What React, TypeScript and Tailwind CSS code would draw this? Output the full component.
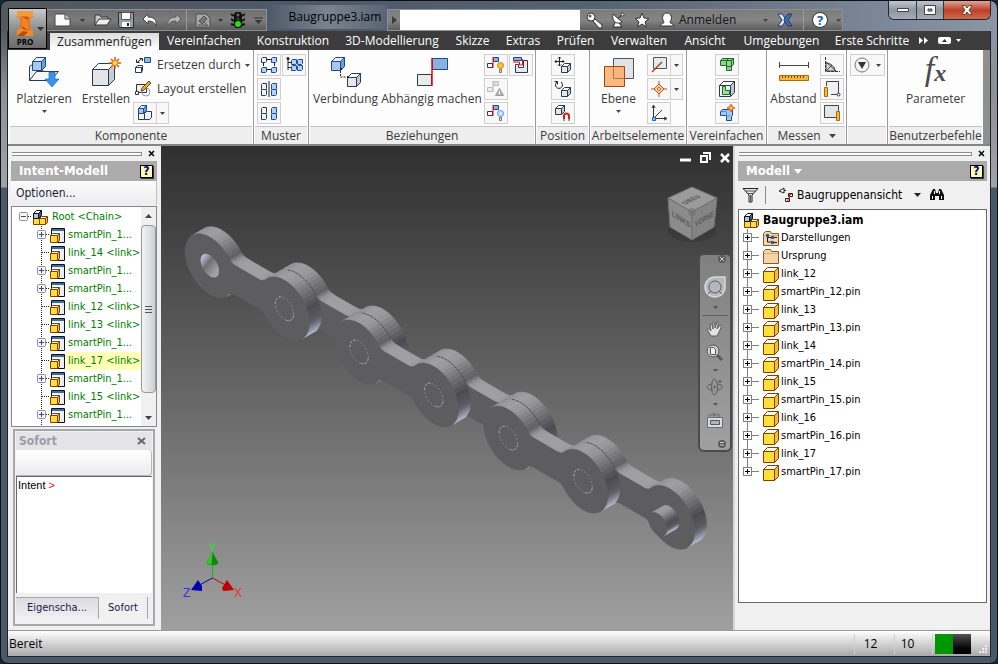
import type { ReactNode } from 'react';

type Point = [number, number];

// ---------------------------------------------------------------------------
// Small drawing helpers
// ---------------------------------------------------------------------------

const Svg = ({ w, h, children }: { w: number; h: number; children: ReactNode }) => (
  <svg width={w} height={h} viewBox={`0 0 ${w} ${h}`} className="block shrink-0" aria-hidden="true">
    {children}
  </svg>
);

interface CubeProps {
  x?: number;
  y?: number;
  s?: number;
  d?: number;
  front?: string;
  top?: string;
  side?: string;
  line?: string;
}

// Oblique box: square front face with a bevelled top and right side.
// Everything sits on half pixels so that the outline stays one pixel wide.
const Cube = ({ x = 0, y = 0, s = 9, d = 4, front = '#e4e7eb', top = '#fff', side = '#c3c8ce', line = '#2b3a4c' }: CubeProps) => (
  <g transform="translate(.5 .5)" stroke={line} strokeWidth="1" strokeLinejoin="round">
    <path d={`M${x} ${y + d}l${d} ${-d}h${s}l${-d} ${d}z`} fill={top} />
    <path d={`M${x + s} ${y + d}l${d} ${-d}v${s}l${-d} ${d}z`} fill={side} />
    <rect x={x} y={y + d} width={s} height={s} fill={front} />
  </g>
);

const BLUE = { front: '#a9c8ec', top: '#e3effb', side: '#6f9ed6', line: '#1e4a8c' };
const GOLD = { front: '#ffdf3a', top: '#fffdf0', side: '#f0c030', line: '#8a3c00' };

// Cube seen almost from the front, for the smallest icons
const Tile = ({ x, y, blue = false, h = 5 }: { x: number; y: number; blue?: boolean; h?: number }) => (
  <path
    d={`M${x + 0.5} ${y + 1.5}l1 -1h4v${h - 1}l-1 1h-4z`}
    fill={blue ? '#b4d2f5' : '#f3f5f7'}
    stroke={blue ? '#1e4a9c' : '#2b3a4c'}
  />
);

const Arrow = ({ color = '#444' }: { color?: string }) => (
  <Svg w={7} h={4}>
    <path d="M0 0h7L3.500 4z" fill={color} />
  </Svg>
);

const SmallArrow = ({ color = '#444' }: { color?: string }) => (
  <Svg w={5} h={3}>
    <path d="M0 0h5L2.500 3z" fill={color} />
  </Svg>
);

// ---------------------------------------------------------------------------
// Title bar
// ---------------------------------------------------------------------------

const LogoIcon = () => (
  <Svg w={18} h={26}>
    <path d="M1 0h16v6l-3 2v9l3 2v6H1v-6l3-2V8L1 6z" fill="#e8761c" />
    <path d="M1 0h16v5l-4 2V5H5v2L1 5z" fill="#f39a3d" />
    <path d="M6 6h6v13H6z" fill="#c2540f" />
    <path d="M6 6l6 3v10l-6-4z" fill="#ee8426" />
    <path d="M1 19l4-2 7 3 5-1v6H1z" fill="#f08a2c" />
    <path d="M1 25l6-5 5 1-4 4z" fill="#b84a0a" />
  </Svg>
);

const quickAccess: { label: string; width: string; icon: ReactNode }[] = [
  { label: 'Neu', width: 'w-6', icon: <Svg w={17} h={14}><path d="M1 1h10l5 5v7H1z" fill="#fafafa" stroke="#444" /><path d="M11 1v5h5" fill="#ccc" stroke="#444" /></Svg> },
  { label: 'Neu Optionen', width: 'w-4', icon: <SmallArrow color="#333" /> },
  { label: 'Öffnen', width: 'w-6', icon: <Svg w={18} h={14}><path d="M1 12V2h5l1 2h7v2" fill="#c8c8c8" stroke="#333" /><path d="M1 12l4-6h12l-4 6z" fill="#eee" stroke="#333" /></Svg> },
  { label: 'Speichern', width: 'w-6', icon: <Svg w={16} h={16}><path d="M.5.5h15v15h-13l-2-2z" fill="#9a9da2" stroke="#2a2e34" /><path d="M3.500.5h9v7h-9z" fill="#fff" stroke="#555" /><path d="M4 10h8v5H4z" fill="#fff" /><path d="M9 11h2v3H9z" fill="#222" /></Svg> },
  { label: 'Rückgängig', width: 'w-6', icon: <Svg w={16} h={14}><path d="M6 1v3c6 0 9 3 8 9-1-3-3-5-8-5v3L1 6z" fill="#fff" stroke="#444" /></Svg> },
  { label: 'Wiederholen', width: 'w-6', icon: <Svg w={16} h={14}><path d="M10 1v3C4 4 1 7 2 13c1-3 3-5 8-5v3l5-5z" fill="#b5b5b5" stroke="#5c5c5c" /></Svg> },
];

const QuickAccess = () => (
  <div className="mt-2 flex h-[22px] w-[220px] shrink-0 items-center border border-l-0 border-[#8d9095] bg-gradient-to-b from-[#6f6f6f] via-[#7c7c7c] to-[#5c5c5c] pl-1">
    {quickAccess.map((item) => (
      <button key={item.label} aria-label={item.label} className={`flex items-center justify-center ${item.width}`}>
        {item.icon}
      </button>
    ))}
    <div className="mr-1 h-5 w-px bg-[#9b9b9b]" />
    <button aria-label="Aktualisieren" className="flex w-6 justify-center">
      <Svg w={16} h={16}>
        <path d="M1 2h10l4 4v9H1z" fill="#a5a5a5" stroke="#4f4f4f" />
        <path d="M4 9l5-5 3 3-5 5zM3 13h9M9 10l4 4" fill="#777" stroke="#4f4f4f" />
      </Svg>
    </button>
    <button aria-label="Aktualisieren Optionen" className="flex w-3 justify-center"><SmallArrow color="#333" /></button>
    <button aria-label="Intent" className="flex w-6 justify-center">
      <Svg w={16} h={18}>
        <path d="M1 3l3 2M15 3l-3 2M1 8l3 2M15 8l-3 2M1 13l3 1M15 13l-3 1" stroke="#111" strokeWidth="2" />
        <rect x="4" y="1" width="8" height="16" rx="3" fill="#111" />
        <circle cx="8" cy="4" r="1.500" fill="#6a6a6a" />
        <circle cx="8" cy="8" r="1.500" fill="#444" />
        <circle cx="8" cy="13" r="3" fill="#1fe01f" />
      </Svg>
    </button>
    <button aria-label="Anpassen" className="flex w-4 justify-center">
      <Svg w={9} h={7}><path d="M0 1h9" stroke="#333" /><path d="M1 3h7L4.500 7z" fill="#333" /></Svg>
    </button>
  </div>
);

const SearchBar = () => (
  <div className="mt-2 flex h-[22px] w-[456px] shrink-0 items-center border border-[#8d9095] bg-gradient-to-b from-[#7c7c7c] via-[#858585] to-[#5e5e5e]">
    <button aria-label="Suchfeld einklappen" className="flex w-3 justify-center">
      <Svg w={5} h={8}><path d="M0 0v8l5-4z" fill="#3c3c3c" /></Svg>
    </button>
    <input aria-label="Suche" className="h-5 w-[180px] bg-white px-1 text-[12px] outline-none" />
    <button aria-label="Suchen" className="ml-0.5 flex w-6 justify-center">
      <Svg w={17} h={17}>
        <path d="M7 9l2-2 7 6v3h-3z" fill="#f4f4f4" stroke="#333" />
        <circle cx="5" cy="5" r="4" fill="#fafafa" stroke="#333" />
        <circle cx="4" cy="4" r="1.500" fill="#555" />
      </Svg>
    </button>
    <button aria-label="Subskription" className="flex w-6 justify-center">
      <Svg w={16} h={16}>
        <path d="M7 7l5-4M5 11l-2 4h9l-3-4" fill="#fff" stroke="#222" />
        <path d="M3 2l9 8c-4 3-11 0-9-8z" fill="#fff" stroke="#333" />
        <circle cx="12.500" cy="2.500" r="1.500" fill="#fff" stroke="#333" />
      </Svg>
    </button>
    <button aria-label="Favoriten" className="flex w-6 justify-center">
      <Svg w={16} h={16}><path d="M8 1l2 5 5 .4-4 3.400 1.500 5.200L8 12l-4.500 3L5 9.800 1 6.400 6 6z" fill="#fff" stroke="#333" /></Svg>
    </button>
    <button className="ml-px flex h-5 w-[104px] items-center gap-1 pl-1 text-[12px] text-[#151515]">
      <Svg w={16} h={16}>
        <path d="M1 14c1-3 4-2 4-4C2 6 4 1 8 1s6 5 3 9c0 2 3 1 4 4z" fill="#fff" stroke="#333" />
      </Svg>
      Anmelden
    </button>
    <button aria-label="Konto" className="flex w-3 justify-center"><SmallArrow /></button>
    <button aria-label="Exchange Apps" className="flex w-7 justify-center">
      <Svg w={14} h={14}>
        <path d="M0 1h4l3 4 1 2-1 2-3 4H0l4-6z" fill="#dce6f2" stroke="#223a66" />
        <path d="M14 1h-4L7 5 6 7l1 2 3 4h4l-4-6z" fill="#3e6db5" stroke="#223a66" />
      </Svg>
    </button>
    <div className="ml-1 h-5 w-px bg-[#9b9b9b]" />
    <button aria-label="Hilfe" className="ml-2 flex size-4 shrink-0 items-center justify-center rounded-full border border-[#333] bg-white text-[13px] leading-none font-bold text-[#1a56a8]">?</button>
    <button aria-label="Hilfe Optionen" className="ml-2 flex"><SmallArrow /></button>
  </div>
);

const TitleBar = () => (
  <header className="relative z-10 flex h-[30px] items-start">
    <button className="mt-[7px] ml-px flex h-[41px] w-[39px] shrink-0 items-start border border-black bg-gradient-to-b from-[#c9c9c9] via-[#8f8f8f] to-[#6d6d6d] text-black" aria-label="Anwendungsmenü PRO">
      <span className="flex w-7 flex-col items-center pt-0.5 pl-1">
        <LogoIcon />
        <span className="text-[8px] leading-[9px] font-bold">PRO</span>
      </span>
      <span className="pt-[18px]"><Arrow color="#333" /></span>
    </button>
    <QuickAccess />
    <h1 className="mt-1 h-6 w-[120px] shrink-0 bg-gradient-to-r from-white/0 via-white/25 to-white/5 pl-4 text-center text-[12px] leading-[23px] whitespace-nowrap text-black">
      Baugruppe3.iam
    </h1>
    <SearchBar />
    <div className="ml-auto flex h-[19px] shrink-0 overflow-hidden rounded-b-md border border-t-0 border-[#22262b] text-white">
      <button aria-label="Minimieren" className="flex w-[28px] items-center justify-center border-r border-[#32373d] bg-gradient-to-b from-[#c0c6ce] via-[#8d96a1] to-[#a5acb5]">
        <Svg w={12} h={6}><path d="M.5 1.500h11v3H.5z" fill="#fff" stroke="#444" /></Svg>
      </button>
      <button aria-label="Maximieren" className="flex w-[27px] items-center justify-center border-r border-[#32373d] bg-gradient-to-b from-[#c0c6ce] via-[#8d96a1] to-[#a5acb5]">
        <Svg w={12} h={10}><path d="M.5.5h11v9H.5z" fill="#fff" stroke="#444" /><path d="M4 4h4v2H4z" fill="#999" stroke="#444" /></Svg>
      </button>
      <button aria-label="Schließen" className="flex w-[46px] items-center justify-center bg-gradient-to-b from-[#e0a498] via-[#bd3f28] to-[#d06a4c]">
        <Svg w={12} h={10}><path d="M1 .5h3l2 2.500L8 .5h3L8 5l3 4.500H8L6 7 4 9.500H1L4 5z" fill="#fff" stroke="#553" /></Svg>
      </button>
    </div>
  </header>
);

// ---------------------------------------------------------------------------
// Ribbon tabs
// ---------------------------------------------------------------------------

const tabs = [
  { name: 'Vereinfachen', width: 'w-[90px]' },
  { name: 'Konstruktion', width: 'w-[88px]' },
  { name: '3D-Modellierung', width: 'w-[110px]' },
  { name: 'Skizze', width: 'w-[51px]' },
  { name: 'Extras', width: 'w-[50px]' },
  { name: 'Prüfen', width: 'w-[55px]' },
  { name: 'Verwalten', width: 'w-[72px]' },
  { name: 'Ansicht', width: 'w-[60px]' },
  { name: 'Umgebungen', width: 'w-[93px]' },
  { name: 'Erste Schritte', width: 'w-[88px]' },
];

const RibbonTabs = () => (
  <nav className="flex h-[19px] bg-[#3c3c3c] pl-[42px] text-[12px] leading-[19px] text-white">
    <button className="mt-0.5 w-[109px] shrink-0 bg-gradient-to-b from-[#dcdcdc] to-white text-center leading-[16px] whitespace-nowrap text-[#222]">Zusammenfügen</button>
    {tabs.map((tab) => (
      <button key={tab.name} className={`flex shrink-0 justify-center whitespace-nowrap ${tab.width}`}>{tab.name}</button>
    ))}
    <button aria-label="Weitere Register" className="flex w-4 items-center justify-center">
      <Svg w={10} h={7}><path d="M0 0v7l4-3.500zM5 0v7l4-3.500z" fill="#fff" /></Svg>
    </button>
    <button aria-label="Multifunktionsleiste minimieren" className="flex w-6 items-center justify-center">
      <Svg w={13} h={7}><rect width="13" height="7" rx="2" fill="#fff" /><path d="M4 5h5L6.500 2z" fill="#333" /></Svg>
    </button>
    <button aria-label="Anzeige" className="flex w-2 items-center"><SmallArrow color="#fff" /></button>
  </nav>
);

// ---------------------------------------------------------------------------
// Ribbon
// ---------------------------------------------------------------------------

const Group = ({ title, width, arrow = false, children }: { title: string; width: string; arrow?: boolean; children: ReactNode }) => (
  <section className={`flex shrink-0 flex-col border-r border-[#9a9a9a] ${width}`}>
    <div className="flex h-[76px]">{children}</div>
    <h2 className="mx-px flex h-[18px] items-center justify-center gap-2 border-t border-[#c4c4c4] bg-[#eeeeee] text-[12px] whitespace-nowrap text-[#3a3a3a]">
      {title}
      {arrow && <Arrow />}
    </h2>
  </section>
);

const BigButton = ({ label, width, arrow = false, icon }: { label: string; width: string; arrow?: boolean; icon: ReactNode }) => (
  <button className={`flex shrink-0 flex-col items-center pt-1.5 text-[12px] text-[#3a3a3a] ${width}`}>
    <span className="flex h-8 w-8 items-center justify-center">{icon}</span>
    <span className="h-[22px] leading-[22px] whitespace-nowrap">{label}</span>
    {arrow && <SmallArrow />}
  </button>
);

const IconButton = ({ label, icon }: { label: string; icon: ReactNode }) => (
  <button aria-label={label} className="flex h-[22px] w-6 items-center justify-center border border-[#cfcfcf] bg-[#f8f8f8]">
    {icon}
  </button>
);

const SplitButton = ({ label, icon }: { label: string; icon: ReactNode }) => (
  <div className="flex">
    <IconButton label={label} icon={icon} />
    <button aria-label={`${label} Optionen`} className="flex w-3 items-center justify-center border border-l-0 border-[#cfcfcf] bg-[#f8f8f8]">
      <SmallArrow />
    </button>
  </div>
);

const IconColumn = ({ children }: { children: ReactNode }) => (
  <div className="flex flex-col gap-0.5 pt-1">{children}</div>
);

const PlaceIcon = () => (
  <Svg w={32} h={32}>
    <path d="M1.500 24.500v-14l3-2h3v6h7l3 2h5v4" fill="#e9edf1" stroke="#2b3a4c" />
    <path d="M1.500 24.500l7-9h22l-8 9z" fill="#f5f6f8" stroke="#2b3a4c" />
    <Cube x={4} y={1} s={9} d={4} {...BLUE} />
    <path d="M21 16h6v7h4l-7 8-7-8h4z" fill="#3b93e8" stroke="#1d5fae" strokeWidth=".6" />
  </Svg>
);

const Spark = ({ x, y, r = 6 }: { x: number; y: number; r?: number }) => (
  <g transform={`translate(${x} ${y})`}>
    <path d={`M0 ${-r}V${r}M${-r} 0H${r}M${-r + 2} ${-r + 2}L${r - 2} ${r - 2}M${r - 2} ${-r + 2}L${-r + 2} ${r - 2}`} stroke="#e2531c" strokeWidth="1.500" />
    <circle r={r / 2.4} fill="#ffe14d" stroke="#f08a1c" />
  </g>
);

const CreateIcon = () => (
  <Svg w={32} h={32}>
    <Cube x={2} y={7} s={16} d={6} front="#e3e5e8" side="#c9cdd2" />
    <Spark x={25} y={7} />
  </Svg>
);

const ConnectIcon = () => (
  <Svg w={32} h={32}>
    <Cube x={1} y={1} s={9} d={4} {...BLUE} />
    <path d="M10.500 15v6h6" fill="none" stroke="#222" strokeDasharray="2 1" />
    <Cube x={17} y={17} s={9} d={4} />
    <path d="M10 12h2v2h-2zM17 20h2v2h-2z" fill="#222" />
  </Svg>
);

const ConstrainIcon = () => (
  <Svg w={32} h={32}>
    <path d="M16.500 2.500h15v11h-15z" fill="#86b3e2" stroke="#1e4a8c" />
    <path d="M1.500 18.500h14v11h-14z" fill="#e8eaec" stroke="#2b3a4c" />
    <path d="M16 2v28" stroke="#f00" strokeWidth="1.500" />
  </Svg>
);

const PlaneIcon = () => (
  <Svg w={32} h={32}>
    <path d="M10.500 2.500h20v20h-20z" fill="#dfe3e8" stroke="#4c5560" />
    <path d="M1.500 10.500h20v20h-20z" fill="#fbb072" fillOpacity=".9" stroke="#a3470e" />
    <path d="M10.500 10.500v12h11" fill="none" stroke="#b4764a" />
  </Svg>
);

const Ruler = () => (
  <Svg w={30} h={26}>
    <path d="M.5 3v6M29.500 3v6M1 6.500h28" stroke="#444" />
    <path d="M.5 16.500h29v5H.5z" fill="#f7b73a" stroke="#a96a08" />
    <path d="M3.500 17v2M6.500 17v2M9.500 17v2M12.500 17v2M15.500 17v2M18.500 17v2M21.500 17v2M24.500 17v2" stroke="#7a4a00" />
  </Svg>
);

const PatternIcon = () => (
  <Svg w={18} h={18}>
    <path d="M7 3.500h4M3.500 7v3M14.500 7v3M7 13.500h4" stroke="#222" />
    <Tile x={1} y={1} />
    <Tile x={11} y={1} blue />
    <Tile x={1} y={11} blue />
    <Tile x={11} y={11} blue />
  </Svg>
);

const MirrorIcon = ({ axis = true }: { axis?: boolean }) => (
  <Svg w={18} h={18}>
    <Tile x={1} y={3} h={6} />
    <Tile x={1} y={9} h={6} />
    <Tile x={11} y={3} h={6} blue />
    <Tile x={11} y={9} h={6} blue />
    {axis && <path d="M9 1v16" stroke="#222" />}
  </Svg>
);

const ComponentsIcon = () => (
  <Svg w={18} h={18}>
    <path d="M3 3v11M3 6.500h4M3 11.500h4" stroke="#222" />
    <circle cx="3" cy="2.500" r="1.500" fill="#222" />
    <Tile x={6} y={3} blue /><Tile x={12} y={3} blue />
    <Tile x={6} y={9} blue /><Tile x={12} y={9} blue />
  </Svg>
);

// Constraint symbol shared by the show / sick / hide buttons
const Joint = ({ muted = false, children }: { muted?: boolean; children: ReactNode }) => (
  <Svg w={18} h={18}>
    <path d="M6.500 1.500h5v4h-5z" fill={muted ? '#ddd' : '#86b3e2'} stroke={muted ? '#bbb' : '#1e4a8c'} />
    <path d="M.5 7.500h5v4h-5z" fill={muted ? '#eee' : '#fff'} stroke={muted ? '#bbb' : '#2b3a4c'} />
    <path d="M6 1v11" stroke={muted ? '#bbb' : '#f00'} />
    {children}
  </Svg>
);

const Bulb = ({ color, line }: { color: string; line: string }) => (
  <g stroke={line}>
    <circle cx="13.500" cy="9.500" r="3" fill={color} />
    <path d="M12.500 13.500h2v3h-2z" fill="#ddd" stroke="#777" />
  </g>
);

const Ribbon = () => (
  <div className="flex h-[96px] border-b-2 border-[#858585] bg-[#8f8f8f]">
    <div className="mr-[7px] flex min-w-0 flex-1 bg-[#fdfdfd] pl-px">
      <Group title="Komponente" width="w-[245px]">
        <BigButton label="Platzieren" width="w-[70px]" arrow icon={<PlaceIcon />} />
        <BigButton label="Erstellen" width="w-[54px]" icon={<CreateIcon />} />
        <div className="flex flex-col gap-0.5 pt-1 text-[12px] text-[#3a3a3a]">
          <button className="flex h-[22px] items-center gap-1 pl-0.5 whitespace-nowrap">
            <Svg w={18} h={18}>
              <path d="M9.500 1.500h6v5h-6z" fill="#8fb7e6" stroke="#1e4a8c" />
              <path d="M.5 11.500h6v5h-6zM.5 11.500l2-2h5v5l-1 2" fill="#fff" stroke="#2b3a4c" />
              <path d="M2 6.500l5-4M1.500 3.500v3h3M7.500 5V2.500h-3" fill="none" stroke="#222" />
            </Svg>
            <span className="w-[84px] text-left">Ersetzen durch</span>
            <SmallArrow />
          </button>
          <button className="flex h-[22px] items-center gap-1 pl-0.5 whitespace-nowrap">
            <Svg w={18} h={18}>
              <path d="M1.500 4.500h10v8h-10z" fill="#eceef0" stroke="#333" />
              <circle cx="11" cy="12" r="4" fill="none" stroke="#999" />
              <path d="M6 11l1-3 7-7 2 2-7 7z" fill="#f2a33a" stroke="#6b4a1c" />
              <path d="M.5 11.500h3v3h-3z" fill="#fff" stroke="#333" />
            </Svg>
            Layout erstellen
          </button>
          <SplitButton label="Komponente spiegeln" icon={
            <Svg w={18} h={18}>
              <path d="M2.500 9.500h6v6h-6z" fill="#f4f4f4" stroke="#2b3a4c" />
              <path d="M8.500 9.500l2-2h5v6l-2 2h-5z" fill="#f4f4f4" stroke="#2b3a4c" />
              <Cube x={2} y={1} s={5} d={3} {...BLUE} />
            </Svg>
          } />
        </div>
      </Group>

      <Group title="Muster" width="w-[55px]">
        <div className="flex gap-px pl-[3px]">
          <IconColumn>
            <IconButton label="Muster" icon={<PatternIcon />} />
            <IconButton label="Spiegeln" icon={<MirrorIcon />} />
            <IconButton label="Kopieren" icon={<MirrorIcon axis={false} />} />
          </IconColumn>
          <IconColumn>
            <IconButton label="Komponentenmuster" icon={<ComponentsIcon />} />
          </IconColumn>
        </div>
      </Group>

      <Group title="Beziehungen" width="w-[227px]">
        <BigButton label="Verbindung" width="w-[73px]" icon={<ConnectIcon />} />
        <BigButton label="Abhängig machen" width="w-[99px]" icon={<ConstrainIcon />} />
        <div className="flex gap-px pl-[3px]">
          <IconColumn>
            <IconButton label="Anzeigen" icon={<Joint><Bulb color="#ffc830" line="#e07a10" /></Joint>} />
            <IconButton label="Fehlerhafte anzeigen" icon={
              <Joint muted><path d="M12.500 8.500l4 7h-8z" fill="#b4b4b4" stroke="#9c9c9c" /><path d="M12.500 11v3" stroke="#fff" /></Joint>
            } />
            <IconButton label="Alle ausblenden" icon={<Joint><Bulb color="#cfe6ff" line="#4d8fd6" /></Joint>} />
          </IconColumn>
          <IconColumn>
            <IconButton label="Kontaktsatz" icon={
              <Svg w={18} h={18}>
                <path d="M3.500 8.500h3v3h5v-7h4v12h-12z" fill="#e4e8ec" stroke="#2b3a4c" />
                <path d="M1.500 1.500h8v3h-8z" fill="#86b3e2" stroke="#1e4a8c" />
                <path d="M1 6h6.500v3h3V3" fill="none" stroke="#f00" />
              </Svg>
            } />
          </IconColumn>
        </div>
      </Group>

      <Group title="Position" width="w-[54px]">
        <div className="flex flex-1 justify-center">
          <IconColumn>
            <IconButton label="Freie Verschiebung" icon={
              <Svg w={18} h={18}>
                <path d="M5.500 1v9M1 5.500h9M4 2.500L5.500 1 7 2.500M4 8.500L5.500 10 7 8.500M2.500 4L1 5.500 2.500 7M8.500 4L10 5.500 8.500 7" fill="none" stroke="#222" />
                <Cube x={7} y={7} s={6} d={3} />
              </Svg>
            } />
            <IconButton label="Freie Drehung" icon={
              <Svg w={18} h={18}>
                <path d="M3 2a3.500 3.500 0 1 0 4 0M.5 1.500h3v3" fill="none" stroke="#222" />
                <Cube x={7} y={7} s={6} d={3} />
              </Svg>
            } />
            <IconButton label="Rasterfang" icon={
              <Svg w={18} h={18}>
                <Cube x={1} y={1} s={6} d={3} />
                <path d="M10 17v-5a2.500 2.500 0 0 1 5 0v5" fill="none" stroke="#c8261a" strokeWidth="2" />
                <path d="M9 16h2M14 16h2" stroke="#999" strokeWidth="2" />
              </Svg>
            } />
          </IconColumn>
        </div>
      </Group>

      <Group title="Arbeitselemente" width="w-[97px]">
        <BigButton label="Ebene" width="w-[57px]" arrow icon={<PlaneIcon />} />
        <IconColumn>
          <SplitButton label="Achse" icon={
            <Svg w={18} h={18}><path d="M3.500 1.500h13v11h-13z" fill="#e6e9ed" stroke="#4c5560" /><path d="M2 16L12 6" stroke="#a3470e" strokeWidth="1.500" /></Svg>
          } />
          <SplitButton label="Punkt" icon={
            <Svg w={18} h={18}><path d="M9 4l5 5-5 5-5-5z" fill="#fbd3a8" stroke="#b4551a" /><path d="M9 1v4M9 13v4M1 9h4M13 9h4" stroke="#b4551a" /><circle cx="9" cy="9" r="1.500" fill="#fff" stroke="#c55a11" /></Svg>
          } />
          <IconButton label="BKS" icon={
            <Svg w={18} h={18}><path d="M3.500 14.500V2M4 14.500h12M4 14l8-8M2 4l1.500-3L5 4M14 13l3 1.500-3 1.500" fill="none" stroke="#333" /><path d="M2.500 13.500h3v3h-3z" fill="#8fc3ff" stroke="#1464c8" /></Svg>
          } />
        </IconColumn>
      </Group>

      <Group title="Vereinfachen" width="w-[80px]">
        <div className="flex flex-1 justify-center">
          <IconColumn>
            <IconButton label="Ansicht vereinfachen" icon={
              <Svg w={18} h={18}><path d="M2.500 4.500l2-2h11v6l-2 2v4h-5v-5h-6z" fill="#8fd48a" stroke="#1d6b22" /><path d="M2.500 4.500h11v6M8.500 10V4.500l2-2M13.500 4.500l2-2M8.500 10.500h5" fill="none" stroke="#1d6b22" /></Svg>
            } />
            <IconButton label="Hüllen definieren" icon={
              <Svg w={18} h={18}><Cube x={1} y={1} s={11} d={4} front="#eef5ee" /><path d="M4.500 6.500h3v4h4v4h-7z" fill="#a6dba2" stroke="#1d6b22" /></Svg>
            } />
            <IconButton label="Vereinfachtes Bauteil" icon={
              <Svg w={18} h={18}><path d="M2.500 7.500l2-2h10v6l-1 1v4h-5v-5h-6z" fill="#a4c8f2" stroke="#1e4a8c" /><path d="M2.500 7.500h6v4M8.500 12h4" fill="none" stroke="#5c8fd0" /><Spark x={13} y={4} r={4} /></Svg>
            } />
          </IconColumn>
        </div>
      </Group>

      <Group title="Messen" width="w-[80px]" arrow>
        <BigButton label="Abstand" width="w-[53px]" icon={<Ruler />} />
        <IconColumn>
          <IconButton label="Winkel" icon={
            <Svg w={18} h={18}><path d="M2.500 1v14.500H17" fill="none" stroke="#333" strokeDasharray="3 1" /><path d="M3 7c5 0 9 4 9 8H3z" fill="#d3d8de" stroke="#444" /><path d="M3 6l10 9M3 15l6-6" stroke="#444" /></Svg>
          } />
          <IconButton label="Kontur" icon={
            <Svg w={18} h={18}><path d="M3.500 6V1.500h12v13H8" fill="#eef0f3" stroke="#444" /><path d="M1.500 7.500h3v9h-3z" fill="#f7b73a" stroke="#a96a08" /><circle cx="15.500" cy="14.500" r="1.500" fill="#fff" stroke="#333" /></Svg>
          } />
          <IconButton label="Fläche" icon={
            <Svg w={18} h={18}><path d="M1.500 1.500h14v12h-14z" fill="#e2e6ea" stroke="#444" /><path d="M13.500 7.500h3v9h-3z" fill="#f7b73a" stroke="#a96a08" /></Svg>
          } />
        </IconColumn>
      </Group>

      <Group title="" width="w-[41px]">
        <button aria-label="Konvertieren" className="mt-1 ml-[3px] flex h-[22px] w-[35px] items-center justify-center gap-1.5 border border-[#cfcfcf] bg-[#f8f8f8]">
          <Svg w={16} h={16}><circle cx="8" cy="8" r="7" fill="#f4f4f4" stroke="#777" /><path d="M4 5h8l-4 7z" fill="#333" /></Svg>
          <SmallArrow />
        </button>
      </Group>

      <section className="flex min-w-0 flex-1 flex-col">
        <button className="flex h-[76px] flex-col items-center text-[12px] text-[#3a3a3a]">
          <span className="flex h-[38px] items-start font-['Liberation_Serif',serif] text-[#4a4a4f] italic">
            <span className="text-[34px] leading-[38px]">f</span>
            <span className="pt-2.5 text-[24px] leading-[27px] font-bold">x</span>
          </span>
          <span className="h-[22px] leading-[22px]">Parameter</span>
        </button>
        <h2 className="mx-px flex h-[18px] items-center justify-center border-t border-[#c4c4c4] bg-[#eeeeee] text-[12px] whitespace-nowrap text-[#3a3a3a]">Benutzerbefehle</h2>
      </section>
    </div>
  </div>
);

// ---------------------------------------------------------------------------
// Browser panels
// ---------------------------------------------------------------------------

const Grip = () => (
  <div className="flex h-[15px] shrink-0 items-center gap-1.5 pl-px">
    <div className="h-1 flex-1 border-y border-r border-[#8c8c8c] bg-[#fafafa]" />
    <button aria-label="Schließen" className="mr-0.5">
      <Svg w={7} h={7}><path d="M1 1l5 5M6 1L1 6" stroke="#000" strokeWidth="1.500" /></Svg>
    </button>
  </div>
);

const HelpBadge = () => (
  <button aria-label="Hilfe" className="flex size-[13px] items-center justify-center border border-black bg-[#fffbb0] text-[12px] leading-none font-bold text-[#00007a] shadow-[1px_1px_0_#333]">?</button>
);

const AssemblyIcon = () => (
  <Svg w={17} h={17}>
    <Cube x={1} y={8} s={6} d={1} {...GOLD} />
    <Cube x={7} y={7} s={6} d={2} {...GOLD} />
    <Cube x={1} y={1} s={5} d={3} front="#a9c8ec" top="#fff" side="#3a5f8c" line="#111" />
  </Svg>
);

const InstanceIcon = () => (
  <Svg w={17} h={17}>
    <path d="M2.500 1.500h13v14h-13z" fill="#e6eefa" stroke="#111" />
    <path d="M3 2h12v2H3z" fill="#3b6ea8" />
    <path d="M3 5h9v8H3z" fill="#fff" />
    <Cube x={1} y={6} s={7} d={2} {...GOLD} />
  </Svg>
);

const PartIcon = () => (
  <Svg w={17} h={17}><Cube x={0} y={1} s={11} d={4} {...GOLD} /></Svg>
);

const FolderIcon = ({ tree = false }: { tree?: boolean }) => (
  <Svg w={17} h={17}>
    <path d="M.5 15.500v-12l2-2h5l1 2h7v12z" fill="#f5d3a4" stroke="#8c5a2a" />
    <path d="M1 5.500h14" stroke="#d8ad78" />
    {tree && (
      <g>
        <path d="M4.500 5v7h4M5 7.500h4" fill="none" stroke="#123" />
        <path d="M3 4h3v3H3zM8 6h3v3H8zM8 11h3v3H8z" fill="#2a5d92" />
        <path d="M11 7.500h3M11 12.500h3" stroke="#123" />
      </g>
    )}
  </Svg>
);

// Rows without a label are scrolled so far that only the icon still shows
const intentRows = [
  { label: 'smartPin_1...', open: true },
  { label: 'link_14 <link>', open: false },
  { label: 'smartPin_1...', open: true },
  { label: 'smartPin_1...', open: true },
  { label: 'link_12 <link>', open: false },
  { label: 'link_13 <link>', open: false },
  { label: 'smartPin_1...', open: true },
  { label: 'link_17 <link>', open: false, active: true },
  { label: 'smartPin_1...', open: true },
  { label: 'link_15 <link>', open: false },
  { label: 'smartPin_1...', open: true },
  { label: '', open: false },
];

const Expander = ({ sign }: { sign: 'plus' | 'minus' }) => (
  <g>
    <rect x="4.500" y="4.500" width="8" height="8" rx="1" fill="#f6f6f6" stroke="#8f8f8f" />
    <path d={sign === 'plus' ? 'M6 8.500h5M8.500 6v5' : 'M6 8.500h5'} stroke="#2b4a9c" />
  </g>
);

const IntentTree = () => (
  <div className="flex min-h-0 flex-1 border border-[#828790] bg-white">
    <ul className="min-w-0 flex-1 overflow-hidden pt-px text-[11px] text-[#008000]">
      <li className="flex h-[18px] items-center pl-[3px]">
        <button aria-label="Root einklappen">
          <Svg w={17} h={18}><path d="M13 8.500h4" stroke="#222" strokeDasharray="1 1" /><Expander sign="minus" /></Svg>
        </button>
        <AssemblyIcon />
        <span className="ml-[3px] whitespace-nowrap">Root &lt;Chain&gt;</span>
      </li>
      {intentRows.map((row, index) => (
        <li key={index} className="flex h-[18px] items-center pl-[21px]">
          <Svg w={16} h={18}>
            <path d="M8.500 0v18M9 8.500h8" stroke="#222" strokeDasharray="1 1" />
            {row.open && <Expander sign="plus" />}
          </Svg>
          <InstanceIcon />
          <span className={row.active ? 'h-[18px] flex-1 bg-[#ffffb8] pl-[2px] leading-[18px] whitespace-nowrap' : 'pl-[2px] leading-[18px] whitespace-nowrap'}>
            {row.label}
          </span>
        </li>
      ))}
    </ul>
    <div className="flex w-[15px] shrink-0 flex-col bg-[#f0f0f0]">
      <button aria-label="Nach oben" className="flex h-[18px] items-center justify-center"><Svg w={7} h={4}><path d="M0 4h7L3.500 0z" fill="#444" /></Svg></button>
      <div className="flex h-[168px] flex-col items-center justify-center gap-0.5 rounded-sm border border-[#979797] bg-gradient-to-r from-[#f4f4f4] to-[#cfd0d3]">
        <div className="h-px w-[7px] bg-[#555]" />
        <div className="h-px w-[7px] bg-[#555]" />
        <div className="h-px w-[7px] bg-[#555]" />
      </div>
      <button aria-label="Nach unten" className="mt-auto flex h-[17px] items-center justify-center"><Svg w={7} h={4}><path d="M0 0h7L3.500 4z" fill="#444" /></Svg></button>
    </div>
  </div>
);

const IntentPanel = () => (
  <aside className="flex w-[153px] shrink-0 flex-col bg-[#f0f0f0] pr-1 pb-1 pl-[3px] font-['DejaVu_Sans_Condensed','DejaVu_Sans',sans-serif]">
    <Grip />
    <div className="flex h-5 shrink-0 items-center justify-between bg-[#ababab] pr-1 pl-2">
      <h2 className="text-[13px] font-bold text-white">Intent-Modell</h2>
      <HelpBadge />
    </div>
    <button className="mb-px h-6 shrink-0 border-r border-[#c0c0c0] bg-gradient-to-b from-[#fbfbfb] to-[#ececee] pl-[5px] text-left text-[12px] text-[#1c1c3c]">Optionen...</button>
    <IntentTree />
    <section className="mx-0.5 mt-0.5 flex h-[197px] shrink-0 flex-col border-2 border-[#a5a8ad] bg-[#f0f0f0] p-px">
      <div className="flex h-[18px] items-center justify-between bg-[#e4e4e7] pr-1.5 pl-[3px]">
        <h2 className="text-[12px] font-bold text-[#9c9ca8]">Sofort</h2>
        <button aria-label="Sofort schließen"><Svg w={9} h={8}><path d="M1 1l7 6M8 1L1 7" stroke="#666" strokeWidth="2" /></Svg></button>
      </div>
      <div className="h-[26px] rounded-r border-r border-b border-[#b5b5bb] bg-gradient-to-b from-white to-[#ebebed]" />
      <div className="flex min-h-0 flex-1 items-start border-t border-l border-[#696969] bg-white pl-px font-['Liberation_Sans',Arial,sans-serif] text-[11px]">
        <label htmlFor="intent-prompt" className="text-black">Intent <span className="text-[#f00]">&gt;</span></label>
        <input id="intent-prompt" className="min-w-0 flex-1 bg-transparent pl-1 outline-none" />
      </div>
      <div className="mt-1 mb-1 flex h-[22px] text-[11px] text-[#20204a]">
        <button className="w-[83px] border-t border-r border-[#a5a8ad] bg-gradient-to-b from-[#dcdce0] to-[#f0f0f2]">Eigenscha...</button>
        <button className="mr-1 flex-1 border-r border-[#a5a8ad]">Sofort</button>
      </div>
    </section>
  </aside>
);

const modelRows = [
  'link_12', 'smartPin_12.pin', 'link_13', 'smartPin_13.pin', 'link_14', 'smartPin_14.pin',
  'link_15', 'smartPin_15.pin', 'link_16', 'smartPin_16.pin', 'link_17', 'smartPin_17.pin',
];

const ModelRow = ({ label, icon, last = false }: { label: string; icon: ReactNode; last?: boolean }) => (
  <li className="flex h-[18px] items-center pl-1">
    <button aria-label={`${label} erweitern`}>
      <Svg w={20} h={18}>
        <path d={last ? 'M4.500 0v9M5 8.500h11' : 'M4.500 0v18M5 8.500h11'} stroke="#808080" />
        <rect x=".5" y="4.500" width="8" height="8" fill="#fff" stroke="#808080" />
        <path d="M2 8.500h5M4.500 6v5" stroke="#000" />
      </Svg>
    </button>
    {icon}
    <span className="pl-px whitespace-nowrap">{label}</span>
  </li>
);

const ModelPanel = () => (
  <aside className="flex w-[257px] shrink-0 flex-col border-l-2 border-[#d6d6d6] bg-[#f0f0f0] pr-[3px] pb-[27px] pl-[3px] font-['DejaVu_Sans_Condensed','DejaVu_Sans',sans-serif]">
    <Grip />
    <div className="flex h-5 shrink-0 items-center bg-[#ababab] pr-1 pl-2 text-white">
      <button className="flex items-center gap-1 text-[13px] font-bold">Modell <Svg w={8} h={5}><path d="M0 0h8L4 5z" fill="#fff" /></Svg></button>
      <span className="ml-auto"><HelpBadge /></span>
    </div>
    <div className="flex h-7 shrink-0 items-center pl-1 text-[12px] text-black">
      <button aria-label="Filter"><Svg w={17} h={16}><path d="M1 1.500h15l-6 6.500v7H7V8z" fill="#e6e6e6" stroke="#222" /><path d="M3 4h11M6 6.500h5M8.500 8v6" stroke="#555" /></Svg></button>
      <div className="ml-1.5 h-[18px] w-px bg-[#8c8c8c]" />
      <button className="ml-3 flex items-center gap-1 whitespace-nowrap">
        <Svg w={15} h={16}>
          <path d="M1 4l5-3v5zM6 3.500h2" fill="#fff" stroke="#222" />
          <path d="M10.500 6.500h4v3h-4zM7.500 11.500h4v3h-4z" fill="#fff" stroke="#222" /><path d="M11.500 11V7.500h2M10 12v2" stroke="#e00" fill="none" />
        </Svg>
        <span className="w-[113px] text-left">Baugruppenansicht</span>
        <Arrow color="#222" />
      </button>
      <button aria-label="Suchen" className="ml-2">
        <Svg w={16} h={14}><path d="M1 12V7l3-6h2l1 4h2l1-4h2l3 6v5h-5V8H6v4z" fill="#111" /><path d="M3.500 8v3M12.500 8v3M5.500 3v3M10.500 3v3" stroke="#fff" /></Svg>
      </button>
    </div>
    <ul className="min-h-0 flex-1 overflow-hidden border border-[#696969] bg-white pt-px text-[11px] text-black">
      <li className="flex h-[18px] items-center gap-[3px] pl-1 text-[12px] font-bold"><AssemblyIcon />Baugruppe3.iam</li>
      <ModelRow label="Darstellungen" icon={<FolderIcon tree />} />
      <ModelRow label="Ursprung" icon={<FolderIcon />} />
      {modelRows.map((row, index) => (
        <ModelRow key={row} label={row} icon={<PartIcon />} last={index === modelRows.length - 1} />
      ))}
    </ul>
  </aside>
);

// ---------------------------------------------------------------------------
// 3D view: the chain is projected from plate coordinates to the screen
// ---------------------------------------------------------------------------

const PITCH = 105.6;
const RADIUS = 35;
const DEPTH: Point = [12, -7];

const project = ([x, y]: Point, [ox, oy]: Point): Point => [ox + x * 0.707, oy + x * 0.408 + y * 0.816];

const toPath = (points: Point[]) => `M${points.map(([x, y]) => `${x.toFixed(1)} ${y.toFixed(1)}`).join('L')}Z`;

const arc = (cx: number, from: number, to: number, radius = RADIUS): Point[] => {
  const points: Point[] = [];
  for (let i = 0; i <= 40; i++) {
    const angle = ((from + ((to - from) * i) / 40) * Math.PI) / 180;
    points.push([cx + radius * Math.cos(angle), radius * Math.sin(angle)]);
  }
  return points;
};

const bend = (a: Point, b: Point, c: Point): Point[] =>
  [0.15, 0.3, 0.45, 0.6, 0.75, 0.9].map((t) => [
    (1 - t) ** 2 * a[0] + 2 * t * (1 - t) * b[0] + t * t * c[0],
    (1 - t) ** 2 * a[1] + 2 * t * (1 - t) * b[1] + t * t * c[1],
  ]);

// Clockwise outline of one plate, starting at the lower neck of the first eye
const plate: Point[] = [
  ...arc(0, 40, 320),
  ...bend([26.8, -22.5], [30, -18], [37, -18]),
  [37, -18],
  [PITCH - 37, -18],
  ...bend([PITCH - 37, -18], [PITCH - 30, -18], [PITCH - 26.8, -22.5]),
  ...arc(PITCH, 220, 500),
  ...bend([PITCH - 26.8, 22.5], [PITCH - 30, 18], [PITCH - 37, 18]),
  [PITCH - 37, 18],
  [37, 18],
  ...bend([37, 18], [30, 18], [26.8, 22.5]),
];

// Edge brightness by direction of the surface normal, in degrees
const shades: [number, number[]][] = [
  [-180, [120, 120, 126]],
  [-130, [148, 148, 152]],
  [-95, [160, 160, 165]],
  [-75, [150, 150, 155]],
  [-50, [112, 112, 117]],
  [-25, [76, 76, 82]],
  [0, [92, 92, 100]],
  [20, [150, 150, 168]],
  [40, [186, 186, 208]],
  [180, [120, 120, 126]],
];

const shade = (angle: number) => {
  const next = shades.findIndex(([limit]) => limit >= angle);
  if (next <= 0) return 'rgb(120,120,126)';
  const [a, from] = shades[next - 1];
  const [b, to] = shades[next];
  const t = (angle - a) / (b - a);
  return `rgb(${from.map((value, i) => Math.round(value + (to[i] - value) * t)).join(',')})`;
};

const Solid = ({ outline, origin, depth = DEPTH, face = '#5d5d5f' }: { outline: Point[]; origin: Point; depth?: Point; face?: string }) => {
  const front = outline.map((point) => project(point, origin));
  return (
    <g>
      {outline.map((point, i) => {
        const j = (i + 1) % outline.length;
        const dx = outline[j][0] - point[0];
        const dy = outline[j][1] - point[1];
        const [a, b] = [front[i], front[j]];
        // Skip empty edges and those that face away from the viewer
        const facing = (b[0] - a[0]) * depth[1] - (b[1] - a[1]) * depth[0];
        if (Math.hypot(dx, dy) < 0.01 || facing >= 0) return null;
        const color = shade((Math.atan2(-dx, dy) * 180) / Math.PI);
        const quad: Point[] = [a, b, [b[0] + depth[0], b[1] + depth[1]], [a[0] + depth[0], a[1] + depth[1]]];
        return <path key={i} d={toPath(quad)} fill={color} stroke={color} strokeWidth=".6" />;
      })}
      <path d={toPath(front)} fill={face} stroke={face} strokeWidth=".6" />
    </g>
  );
};

const pin = (index: number, back = 0): Point => [
  209.8 + index * 74.66 + DEPTH[0] * back,
  265.7 + index * 43.1 + DEPTH[1] * back,
];

const polyline = (points: Point[], origin: Point) =>
  points.map((point) => project(point, origin).map((n) => n.toFixed(1)).join(',')).join(' ');

const Chain = () => (
  <g>
    {[5, 3, 1].map((i) => <Solid key={i} outline={plate} origin={pin(i, 1)} />)}
    <Solid outline={arc(0, 0, 360, 13)} origin={pin(6)} />
    {[4, 2, 0].map((i) => <Solid key={i} outline={plate} origin={pin(i)} />)}
    {[1, 2, 3, 4, 5].map((i) => (
      <g key={i} fill="none">
        <polyline points={polyline(arc(0, -110, -38), pin(i, 1))} stroke="#4c4c50" strokeDasharray="3 1" />
        <polyline points={polyline(arc(0, 0, 360, 13), pin(i))} stroke="#88888e" strokeDasharray="2 2" />
        <polyline points={polyline(arc(0, 180, 250, 13), pin(i))} stroke="#b4b4c2" strokeDasharray="2 2" />
        <polyline points={polyline(arc(0, 10, 80, 13), pin(i))} stroke="#b4b4c2" strokeDasharray="2 2" />
      </g>
    ))}
    <path d={toPath(arc(0, 0, 360, 13).map((point) => project(point, pin(0))))} fill="url(#bore)" />
  </g>
);

const Triad = () => (
  <g fontFamily="Liberation Sans, sans-serif" fontSize="12">
    <path d="M212.500 578v-24" stroke="#00c800" />
    <path d="M212.500 552l6 11c-2 3-10 3-12 0z" fill="#0a8a0a" />
    <path d="M212.500 552l-6 11 5 2z" fill="#2fc82f" />
    <path d="M212.500 578l13 7" stroke="#c80000" />
    <path d="M234 590l-7-10-5 8 1 3z" fill="#c00000" />
    <path d="M212.500 578l-13 7" stroke="#0000b4" />
    <path d="M191 590l7-10 4 6v5z" fill="#0000b0" />
    <text x="208.500" y="552" fill="#25e025">Y</text>
    <text x="234" y="597" fill="#f03030">X</text>
    <text x="183" y="597" fill="#3030f0">Z</text>
  </g>
);

const ViewCube = () => (
  <g stroke="#717171" strokeLinejoin="round">
    <ellipse cx="692" cy="230" rx="24" ry="12" fill="#222" fillOpacity=".25" stroke="none" />
    <path d="M692 187l25 11-25 14-24-14z" fill="#9b9b9b" />
    <path d="M668 198l24 14v28l-22-13z" fill="#8c8c8c" />
    <path d="M717 198l-25 14v28l22-13z" fill="#848484" />
    <g fill="#5a5a5a" stroke="none" fontFamily="Liberation Sans, sans-serif" fontWeight="bold" fontSize="8">
      <text transform="matrix(.76 .5 0 1 672 216)">LINKS</text>
      <text transform="matrix(.66 -.38 0 1 695 227)">VORNE</text>
      <text transform="matrix(.7 -.35 .8 .4 685 205)">OBEN</text>
    </g>
    <circle cx="692" cy="212" r="4" fill="#6c6c6c" fillOpacity=".5" stroke="none" />
  </g>
);

const NavGap = () => <span className="flex h-4 items-center"><SmallArrow color="#555" /></span>;

const NavigationBar = () => (
  <div className="absolute top-[107px] right-px flex h-[199px] w-[34px] flex-col items-center rounded-md border-2 border-[#4b4b4b] bg-gradient-to-b from-[#808080] to-[#a0a0a0]">
    <button aria-label="Navigationsleiste schließen" className="mr-1 self-end">
      <Svg w={8} h={8}><circle cx="4" cy="4" r="4" fill="#5c5c5c" /><path d="M2 2l4 4M6 2L2 6" stroke="#ccc" /></Svg>
    </button>
    <button aria-label="Steuerrad" className="mt-3">
      <Svg w={24} h={24}><path d="M22 2v10a10 10 0 1 1-10-10z" fill="#b4b7bc" stroke="#d8d8d8" strokeWidth="1.500" /><circle cx="12" cy="12" r="6" fill="#b4b7bc" stroke="#5d5f66" /><path d="M5 19l3-3M19 19l-3-3" stroke="#5d5f66" /></Svg>
    </button>
    <NavGap />
    <div className="w-[26px] border-t border-[#636363]" />
    <button aria-label="Pan" className="mt-1">
      <Svg w={18} h={18}><path d="M5 16L1 9c1-1 2 0 4 2L4 4c1-1 2 0 3 5V2c1-1 2 0 2 6l2-6c2 0 1 2 0 7l3-4c2 0 1 2 0 5l-3 6z" fill="#e3e3e3" stroke="#5c5c5c" /></Svg>
    </button>
    <button aria-label="Zoom" className="mt-1.5">
      <Svg w={18} h={18}><path d="M11 11l5 5" stroke="#5a5a5a" strokeWidth="3" /><circle cx="7" cy="7" r="6" fill="#c9d0d0" stroke="#555" /><path d="M4.500 3.500h3l2 2v5h-5z" fill="#eef2f2" stroke="#555" /></Svg>
    </button>
    <NavGap />
    <button aria-label="Freier Orbit">
      <Svg w={18} h={18}><ellipse cx="8.500" cy="9" rx="3" ry="8" fill="none" stroke="#5c5c5c" /><path d="M5 6c-6 2-5 6 2 6M12 6c6 1 6 5-1 6M7 9h3M8.500 7.500v3M12 3.500h4M14 2v3" fill="none" stroke="#5c5c5c" /></Svg>
    </button>
    <NavGap />
    <button aria-label="Ansicht von Fläche">
      <Svg w={18} h={16}><path d="M1.500 5.500h15v10h-15z" fill="#d9dce2" stroke="#6a6d74" /><path d="M4.500 8.500h9v4h-9z" fill="#b0b4bc" stroke="#55585f" /><path d="M2 4l7-3-2 3 6-2v3" fill="none" stroke="#6a6d74" /></Svg>
    </button>
    <button aria-label="Anpassen" className="mt-auto mr-1 mb-0.5 self-end">
      <Svg w={8} h={8}><circle cx="4" cy="4" r="4" fill="#5c5c5c" /><path d="M2 2.500h4M2 5h4" stroke="#ccc" /></Svg>
    </button>
  </div>
);

const Viewport = () => (
  <main className="relative min-w-0 flex-1 overflow-hidden bg-gradient-to-b from-[#303030] to-[#a0a0a0]">
    <svg viewBox="161 146 572 484" className="absolute inset-0 size-full" role="img" aria-label="Kette">
      <defs>
        <linearGradient id="bore" x1="0" y1="0" x2="1" y2="1">
          <stop offset=".1" stopColor="#c0c0d8" />
          <stop offset=".4" stopColor="#6e6e74" />
          <stop offset=".8" stopColor="#a2a2a6" />
        </linearGradient>
      </defs>
      <Chain />
      <ViewCube />
      <Triad />
    </svg>
    <div className="absolute top-[5px] right-0.5 flex items-center gap-2">
      <button aria-label="Minimieren"><Svg w={12} h={13}><path d="M1 7.500h11v3H1z" fill="#fff" /></Svg></button>
      <button aria-label="Wiederherstellen"><Svg w={12} h={13}><path d="M4 2h7v7" fill="none" stroke="#fff" strokeWidth="2" /><path d="M2 5h6v6H2z" fill="#3a3a3a" stroke="#fff" strokeWidth="2" /></Svg></button>
      <button aria-label="Schließen"><Svg w={12} h={13}><path d="M2 3l8 8M10 3l-8 8" stroke="#fff" strokeWidth="2.500" /></Svg></button>
    </div>
    <NavigationBar />
  </main>
);

// ---------------------------------------------------------------------------
// Status bar and window
// ---------------------------------------------------------------------------

const StatusBar = () => (
  <footer className="flex h-[26px] shrink-0 items-center border-t border-[#9a9a9a] bg-gradient-to-b from-white to-[#a9a9a9] text-[12px] text-black">
    <span className="flex-1 pl-px">Bereit</span>
    <span className="h-5 w-10 border-l border-[#cfcfcf] pr-2 text-center leading-5">12</span>
    <span className="h-5 w-[38px] border-l border-[#cfcfcf] pr-3 text-center leading-5">10</span>
    <div className="flex h-5 w-[39px] border-l border-[#cfcfcf] pl-0.5">
      <div className="w-[18px] bg-[#009600]" />
      <div className="w-[18px] bg-gradient-to-b from-[#555] to-black" />
    </div>
    <div className="flex h-5 w-[19px] items-end justify-end pr-0.5">
      <Svg w={9} h={9}><path d="M6 0h2v2H6zM3 3h2v2H3zM6 3h2v2H6zM0 6h2v2H0zM3 6h2v2H3zM6 6h2v2H6z" fill="#f0f0f0" /></Svg>
    </div>
  </footer>
);

const App = () => (
  <div className="h-screen bg-[#0b2a44] font-['Open_Sans','Noto_Sans',sans-serif]">
    <div className="flex h-full flex-col rounded-lg border border-[#0c0f13] bg-[linear-gradient(to_bottom,transparent_30px,#8d9196_90px,#a0a4a8_186px,#4b5868_187px,#4b5868_100%),linear-gradient(to_right,#55595f,#4d5969_30%,#566375_60%,#8b96a5)] px-1.5 pb-1.5">
      <TitleBar />
      <div className="flex min-h-0 flex-1 flex-col overflow-hidden border border-t-0 border-[#1f252c]">
        <RibbonTabs />
        <Ribbon />
        <div className="flex min-h-0 flex-1">
          <IntentPanel />
          <Viewport />
          <ModelPanel />
        </div>
        <StatusBar />
      </div>
    </div>
  </div>
);

export default App;
